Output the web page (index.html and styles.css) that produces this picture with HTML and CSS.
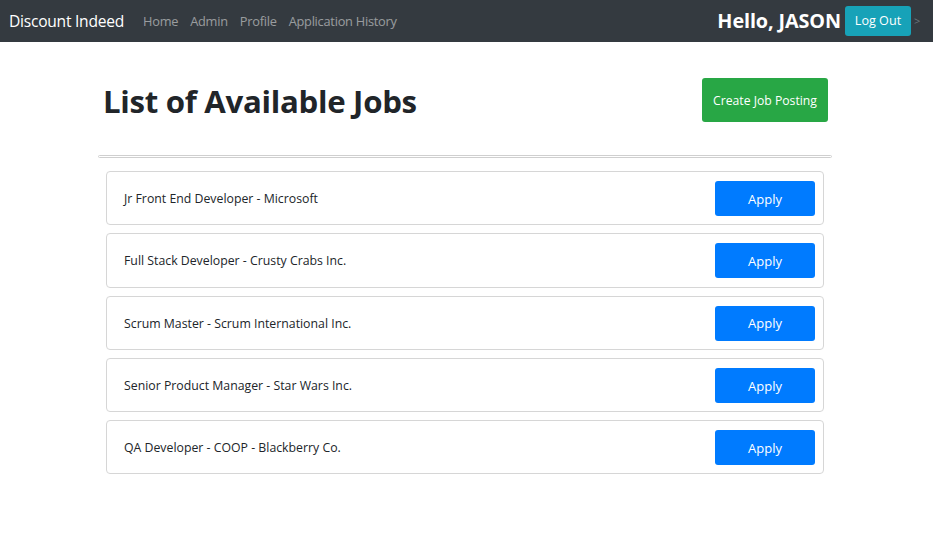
FILE: index.html
```html
<!DOCTYPE html>
<html>
<head>
<meta charset="utf-8">
<link rel="stylesheet" href="styles.css">
</head>
<body>
<nav class="navbar">
  <a class="brand">Discount Indeed</a>
  <ul class="nav-links">
    <li>Home</li>
    <li>Admin</li>
    <li>Profile</li>
    <li>Application History</li>
  </ul>
  <div class="nav-right">
    <span class="hello">Hello, JASON</span>
    <button class="btn-logout">Log Out</button>
    <span class="caret">&gt;</span>
  </div>
</nav>
<main class="main">
  <div class="title-row">
    <h1 class="title">List of Available Jobs</h1>
    <button class="btn-create">Create Job Posting</button>
  </div>
  <div class="divider"></div>
  <ul class="jobs">
    <li class="job"><span class="job-name">Jr Front End Developer - Microsoft</span><button class="btn-apply">Apply</button></li>
    <li class="job"><span class="job-name">Full Stack Developer - Crusty Crabs Inc.</span><button class="btn-apply">Apply</button></li>
    <li class="job"><span class="job-name">Scrum Master - Scrum International Inc.</span><button class="btn-apply">Apply</button></li>
    <li class="job"><span class="job-name">Senior Product Manager - Star Wars Inc.</span><button class="btn-apply">Apply</button></li>
    <li class="job"><span class="job-name">QA Developer - COOP - Blackberry Co.</span><button class="btn-apply">Apply</button></li>
  </ul>
</main>
</body>
</html>
```
FILE: styles.css
```css
* { box-sizing: border-box; }
body {
  margin: 0;
  font-family: "Open Sans", "Noto Sans", sans-serif;
  color: #212529;
  background: #fff;
}
.navbar {
  height: 42px;
  background: #343a40;
  display: flex;
  align-items: center;
  padding: 0 0 1px 9px;
}
.brand {
  color: #fff;
  font-size: 15.6px;
  letter-spacing: -0.25px;
  margin-right: 19px;
}
.nav-links {
  list-style: none;
  margin: 0;
  padding: 0;
  display: flex;
  gap: 12px;
  font-size: 12.8px;
  color: rgba(255,255,255,0.5);
  letter-spacing: -0.25px;
}
.nav-right {
  margin-left: auto;
  display: flex;
  align-items: center;
}
.hello {
  color: #fff;
  font-weight: 700;
  font-size: 19.8px;
  letter-spacing: -0.1px;
  margin-right: 4px;
}
.btn-logout {
  background: #17a2b8;
  color: #fff;
  border: none;
  border-radius: 3px;
  height: 30px;
  width: 66px;
  font-family: inherit;
  font-size: 12.6px;
  padding: 0;
}
.caret {
  color: #6c757d;
  font-size: 11px;
  width: 22px;
  padding-left: 3px;
}
.main {
  padding-top: 36px;
}
.title-row {
  width: 725px;
  margin-left: calc(50% - 363.5px);
  display: flex;
  justify-content: space-between;
  align-items: center;
  height: 44px;
}
.title {
  margin: 2px 0 0;
  font-size: 31.2px;
  font-weight: 700;
  letter-spacing: -0.3px;
}
.btn-create {
  background: #28a745;
  color: #fff;
  border: none;
  border-radius: 3px;
  width: 126px;
  height: 44px;
  font-family: inherit;
  font-size: 12.2px;
  padding: 0;
}
.divider {
  width: 734px;
  margin: 33px 0 0 calc(50% - 368.5px);
  height: 3px;
  border: 1px solid #cfcfcf;
  border-radius: 2px;
}
.jobs {
  list-style: none;
  width: 718px;
  margin: 13px 0 0 calc(50% - 360.5px);
  padding: 0;
  display: flex;
  flex-direction: column;
  gap: 8px;
}
.job {
  height: 54.3px;
  border: 1px solid #d6d6d6;
  border-radius: 4px;
  display: flex;
  align-items: center;
  justify-content: space-between;
  padding: 1px 8px 0 17px;
}
.job-name {
  font-size: 12.3px;
}
.btn-apply {
  background: #007bff;
  color: #fff;
  border: none;
  border-radius: 3px;
  width: 100px;
  height: 35px;
  font-family: inherit;
  font-size: 13px;
  padding: 0;
}
```
